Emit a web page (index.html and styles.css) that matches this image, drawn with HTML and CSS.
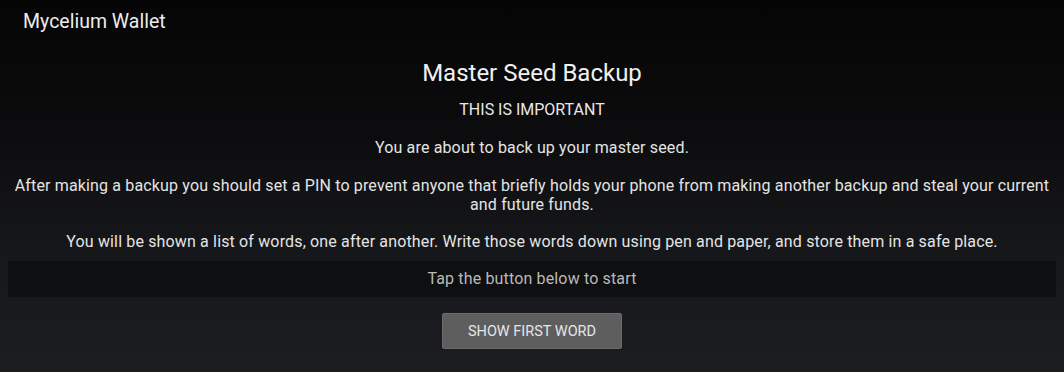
FILE: index.html
```html
<!DOCTYPE html>
<html lang="en">
<head>
<meta charset="utf-8">
<title>Mycelium Wallet</title>
<link rel="stylesheet" href="styles.css">
</head>
<body>
<div class="app">
  <header class="appbar">Mycelium Wallet</header>
  <main class="content">
    <h1 class="title">Master Seed Backup</h1>
    <div class="important">THIS IS IMPORTANT</div>
    <p class="text p1">You are about to back up your master seed.</p>
    <p class="text p2">After making a backup you should set a PIN to prevent anyone that briefly holds your phone from making another backup and steal your current and future funds.</p>
    <p class="text p3">You will be shown a list of words, one after another. Write those words down using pen and paper, and store them in a safe place.</p>
    <div class="hint">Tap the button below to start</div>
    <button class="btn" type="button">SHOW FIRST WORD</button>
  </main>
</div>
</body>
</html>
```
FILE: styles.css
```css
html, body {
  margin: 0;
  padding: 0;
  height: 100%;
}
body {
  background: linear-gradient(180deg, #050505 0%, #0c0c0e 35%, #17181b 70%, #1c1d21 100%);
  font-family: Roboto, "Noto Sans", "Liberation Sans", sans-serif;
  color: #e8e8e8;
  overflow: hidden;
}
.app {
  display: flex;
  flex-direction: column;
  height: 372px;
}
.appbar {
  height: 42px;
  box-sizing: border-box;
  padding: 11px 23px 0;
  font-size: 19.5px;
  line-height: 22px;
  color: #ececec;
}
.content {
  display: flex;
  flex-direction: column;
  align-items: center;
  padding: 0 8px;
}
.title {
  margin: 17px 0 0;
  font-size: 24px;
  font-weight: 400;
  line-height: 28px;
  color: #f0f0f0;
}
.important {
  margin-top: 13px;
  font-size: 16px;
  line-height: 20px;
  color: #e8e8e8;
}
.text {
  margin: 0;
  font-size: 16px;
  letter-spacing: 0.15px;
  line-height: 19px;
  text-align: center;
  color: #e4e4e4;
  padding: 0 4px;
}
.p1 { margin-top: 17.5px; }
.p2 { margin-top: 19px; }
.p3 { margin-top: 18px; }
.hint {
  align-self: stretch;
  margin-top: 10.5px;
  height: 36px;
  line-height: 36px;
  text-align: center;
  font-size: 16px;
  letter-spacing: 0.15px;
  color: #b9b9b9;
  background: #0e0f11;
}
.btn {
  margin-top: 16px;
  width: 180px;
  height: 36px;
  background: #5e5e5f;
  border: 1px solid #6b6b6c;
  border-radius: 2px;
  color: #e6e6e6;
  font-family: Roboto, "Noto Sans", "Liberation Sans", sans-serif;
  font-size: 14.5px;
  padding: 0;
}
```
